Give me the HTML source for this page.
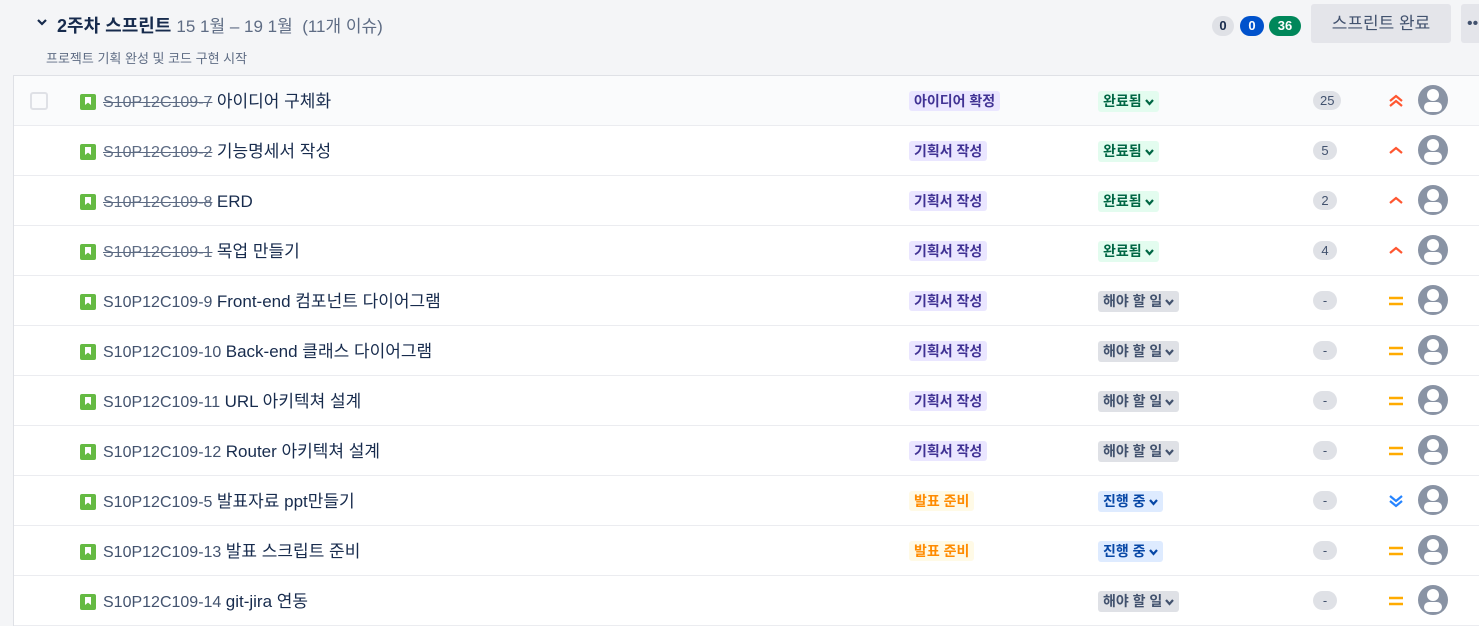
<!DOCTYPE html>
<html><head><meta charset="utf-8"><style>
body{margin:0;width:1479px;height:622px;overflow:hidden;background:#f4f5f7;font-family:"Liberation Sans","Noto Sans CJK KR",sans-serif;color:#172b4d;position:relative}
.a{position:absolute}
.list{position:absolute;left:13px;top:75px;width:1480px;border-left:1px solid #dfe1e6;border-top:1px solid #dfe1e6;background:#fff}
.row{height:49px;border-bottom:1px solid #ebecf0;position:relative;background:#fff}
.row span,.row div,.row>svg{position:absolute}
.ic{left:66px;top:18px;width:16px;height:16px;background:#65ba43;border-radius:2px}
.ic:after{content:"";position:absolute;left:5px;top:3px;width:6px;height:8px;background:#fff;clip-path:polygon(0 0,100% 0,100% 100%,50% 70%,0 100%)}
.key{left:89px;top:15px;font-size:16px;line-height:22px;height:22px;color:#42526e;white-space:nowrap}
.key s{color:#5e6c84}
.key b{font-weight:normal;color:#172b4d;font-size:17px}
.ep{left:895px;top:15px;font-size:14px;padding:0 5px;height:20px;line-height:20px;border-radius:3px;background:#eae6ff;color:#403294;font-weight:bold}
.ep.y{background:#fffae6;color:#ff8b00}
.st{left:1084px;top:15px;font-size:14px;padding:0 4px 0 5px;border-radius:3px;font-weight:bold;height:21px;line-height:21px;white-space:nowrap}
.st svg{position:static;vertical-align:-1px;margin-left:2px}
.st.d{background:#e3fcef;color:#006644}
.st.t{background:#dfe1e6;color:#42526e}
.st.p{background:#deebff;color:#0747a6}
.pt{left:1299px;top:15px;min-width:10px;padding:0 7px;height:19px;line-height:19px;border-radius:10px;background:#dfe1e6;font-size:13px;text-align:center;color:#42526e}
.pr{left:1372px;top:15px;width:20px;height:20px}
.av{left:1404px;top:9px;width:30px;height:30px;border-radius:50%;background:#8993a4;overflow:hidden}
.av:before{content:"";position:absolute;left:9px;top:4px;width:12px;height:12px;border-radius:50%;background:#fff}
.av:after{content:"";position:absolute;left:6px;top:17px;width:18px;height:10px;border-radius:5px;background:#fff}
</style></head><body>
<svg class="a" style="left:36px;top:17px" width="12" height="10" viewBox="0 0 12 10"><path d="M2 3l4 4 4-4" stroke="#172b4d" stroke-width="2.2" fill="none"/></svg>
<div class="a" style="left:57px;top:12px;font-size:18px;white-space:nowrap"><b>2주차 스프린트</b> <span style="color:#5e6c84;font-size:17px"> 15 1월 – 19 1월 &nbsp;(11개 이슈)</span></div>
<div class="a" style="left:46px;top:48px;font-size:13px;color:#5e6c84">프로젝트 기획 완성 및 코드 구현 시작</div>
<div class="a" style="left:1212px;top:16px;height:20px;width:22px;border-radius:10px;background:#dfe1e6;font-size:13px;font-weight:bold;text-align:center;line-height:20px">0</div>
<div class="a" style="left:1240px;top:16px;height:20px;width:24px;border-radius:10px;background:#0052cc;color:#fff;font-size:13px;font-weight:bold;text-align:center;line-height:20px">0</div>
<div class="a" style="left:1269px;top:16px;height:20px;width:32px;border-radius:10px;background:#00875a;color:#fff;font-size:13px;font-weight:bold;text-align:center;line-height:20px">36</div>
<div class="a" style="left:1311px;top:4px;width:140px;height:39px;border-radius:3px;background:#e4e5ea;color:#42526e;font-size:17px;text-align:center;line-height:39px">스프린트 완료</div>
<div class="a" style="left:1461px;top:4px;width:30px;height:39px;border-radius:3px;background:#e4e5ea;color:#42526e;line-height:39px;padding-left:6px">••</div>
<div class="list">
<div class="row" style="background:#fafbfc"><div style="left:16px;top:16px;width:14px;height:14px;border:2px solid #dfe1e6;border-radius:3px;background:#fafbfc"></div><div class="ic"></div><span class="key"><s>S10P12C109-7</s> <b>아이디어 구체화</b></span><span class="ep">아이디어 확정</span><span class="st d">완료됨<svg width="11" height="9" viewBox="0 0 11 9"><path d="M2 2l3.5 4L9 2" stroke="currentColor" stroke-width="2.2" fill="none"/></svg></span><span class="pt">25</span><svg class="pr" viewBox="0 0 20 20"><path d="M4 10l6-5 6 5M4 15l6-5 6 5" stroke="#ff5630" stroke-width="2.2" fill="none"/></svg><div class="av"></div></div>
<div class="row"><div class="ic"></div><span class="key"><s>S10P12C109-2</s> <b>기능명세서 작성</b></span><span class="ep">기획서 작성</span><span class="st d">완료됨<svg width="11" height="9" viewBox="0 0 11 9"><path d="M2 2l3.5 4L9 2" stroke="currentColor" stroke-width="2.2" fill="none"/></svg></span><span class="pt">5</span><svg class="pr" viewBox="0 0 20 20"><path d="M4 12l6-5 6 5" stroke="#ff5630" stroke-width="2.2" fill="none"/></svg><div class="av"></div></div>
<div class="row"><div class="ic"></div><span class="key"><s>S10P12C109-8</s> <b>ERD</b></span><span class="ep">기획서 작성</span><span class="st d">완료됨<svg width="11" height="9" viewBox="0 0 11 9"><path d="M2 2l3.5 4L9 2" stroke="currentColor" stroke-width="2.2" fill="none"/></svg></span><span class="pt">2</span><svg class="pr" viewBox="0 0 20 20"><path d="M4 12l6-5 6 5" stroke="#ff5630" stroke-width="2.2" fill="none"/></svg><div class="av"></div></div>
<div class="row"><div class="ic"></div><span class="key"><s>S10P12C109-1</s> <b>목업 만들기</b></span><span class="ep">기획서 작성</span><span class="st d">완료됨<svg width="11" height="9" viewBox="0 0 11 9"><path d="M2 2l3.5 4L9 2" stroke="currentColor" stroke-width="2.2" fill="none"/></svg></span><span class="pt">4</span><svg class="pr" viewBox="0 0 20 20"><path d="M4 12l6-5 6 5" stroke="#ff5630" stroke-width="2.2" fill="none"/></svg><div class="av"></div></div>
<div class="row"><div class="ic"></div><span class="key">S10P12C109-9 <b>Front-end 컴포넌트 다이어그램</b></span><span class="ep">기획서 작성</span><span class="st t">해야 할 일<svg width="11" height="9" viewBox="0 0 11 9"><path d="M2 2l3.5 4L9 2" stroke="currentColor" stroke-width="2.2" fill="none"/></svg></span><span class="pt">-</span><svg class="pr" viewBox="0 0 20 20"><path d="M3 7h14M3 13h14" stroke="#ffab00" stroke-width="2.5"/></svg><div class="av"></div></div>
<div class="row"><div class="ic"></div><span class="key">S10P12C109-10 <b>Back-end 클래스 다이어그램</b></span><span class="ep">기획서 작성</span><span class="st t">해야 할 일<svg width="11" height="9" viewBox="0 0 11 9"><path d="M2 2l3.5 4L9 2" stroke="currentColor" stroke-width="2.2" fill="none"/></svg></span><span class="pt">-</span><svg class="pr" viewBox="0 0 20 20"><path d="M3 7h14M3 13h14" stroke="#ffab00" stroke-width="2.5"/></svg><div class="av"></div></div>
<div class="row"><div class="ic"></div><span class="key">S10P12C109-11 <b>URL 아키텍쳐 설계</b></span><span class="ep">기획서 작성</span><span class="st t">해야 할 일<svg width="11" height="9" viewBox="0 0 11 9"><path d="M2 2l3.5 4L9 2" stroke="currentColor" stroke-width="2.2" fill="none"/></svg></span><span class="pt">-</span><svg class="pr" viewBox="0 0 20 20"><path d="M3 7h14M3 13h14" stroke="#ffab00" stroke-width="2.5"/></svg><div class="av"></div></div>
<div class="row"><div class="ic"></div><span class="key">S10P12C109-12 <b>Router 아키텍쳐 설계</b></span><span class="ep">기획서 작성</span><span class="st t">해야 할 일<svg width="11" height="9" viewBox="0 0 11 9"><path d="M2 2l3.5 4L9 2" stroke="currentColor" stroke-width="2.2" fill="none"/></svg></span><span class="pt">-</span><svg class="pr" viewBox="0 0 20 20"><path d="M3 7h14M3 13h14" stroke="#ffab00" stroke-width="2.5"/></svg><div class="av"></div></div>
<div class="row"><div class="ic"></div><span class="key">S10P12C109-5 <b>발표자료 ppt만들기</b></span><span class="ep y">발표 준비</span><span class="st p">진행 중<svg width="11" height="9" viewBox="0 0 11 9"><path d="M2 2l3.5 4L9 2" stroke="currentColor" stroke-width="2.2" fill="none"/></svg></span><span class="pt">-</span><svg class="pr" viewBox="0 0 20 20"><path d="M4 5l6 5 6-5M4 10l6 5 6-5" stroke="#2684ff" stroke-width="2.2" fill="none"/></svg><div class="av"></div></div>
<div class="row"><div class="ic"></div><span class="key">S10P12C109-13 <b>발표 스크립트 준비</b></span><span class="ep y">발표 준비</span><span class="st p">진행 중<svg width="11" height="9" viewBox="0 0 11 9"><path d="M2 2l3.5 4L9 2" stroke="currentColor" stroke-width="2.2" fill="none"/></svg></span><span class="pt">-</span><svg class="pr" viewBox="0 0 20 20"><path d="M3 7h14M3 13h14" stroke="#ffab00" stroke-width="2.5"/></svg><div class="av"></div></div>
<div class="row"><div class="ic"></div><span class="key">S10P12C109-14 <b>git-jira 연동</b></span><span class="st t">해야 할 일<svg width="11" height="9" viewBox="0 0 11 9"><path d="M2 2l3.5 4L9 2" stroke="currentColor" stroke-width="2.2" fill="none"/></svg></span><span class="pt">-</span><svg class="pr" viewBox="0 0 20 20"><path d="M3 7h14M3 13h14" stroke="#ffab00" stroke-width="2.5"/></svg><div class="av"></div></div>
</div>
</body></html>
